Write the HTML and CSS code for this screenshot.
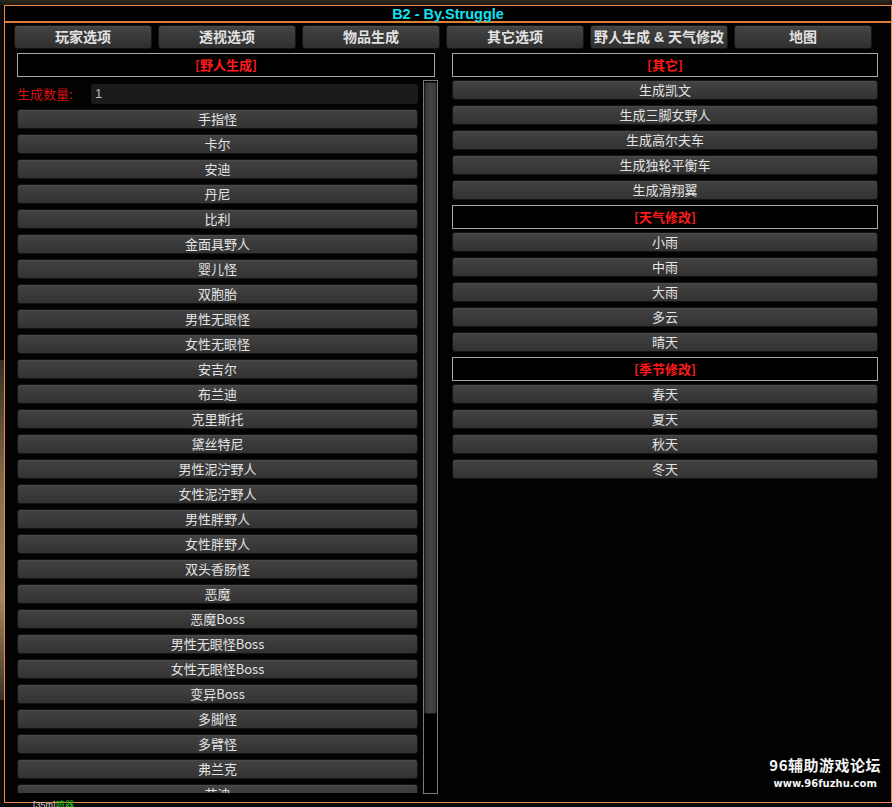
FILE: index.html
```html
<!DOCTYPE html>
<html lang="zh-CN">
<head>
<meta charset="utf-8">
<title>B2 - By.Struggle</title>
<link rel="stylesheet" href="styles.css">
</head>
<body>
<div class="window">
  <div class="titlebar">B2 - By.Struggle</div>
  <nav class="tabs">
    <button class="tab">玩家选项</button>
    <button class="tab">透视选项</button>
    <button class="tab">物品生成</button>
    <button class="tab">其它选项</button>
    <button class="tab">野人生成 &amp; 天气修改</button>
    <button class="tab">地图</button>
  </nav>
  <div class="columns">
    <section class="col col-left">
      <div class="section-head">[野人生成]</div>
      <div class="scroll-wrap">
        <div class="scroll-list">
          <div class="field-row">
            <label class="field-label">生成数量:</label>
            <div class="field-input">1</div>
          </div>
          <button class="btn">手指怪</button>
          <button class="btn">卡尔</button>
          <button class="btn">安迪</button>
          <button class="btn">丹尼</button>
          <button class="btn">比利</button>
          <button class="btn">金面具野人</button>
          <button class="btn">婴儿怪</button>
          <button class="btn">双胞胎</button>
          <button class="btn">男性无眼怪</button>
          <button class="btn">女性无眼怪</button>
          <button class="btn">安吉尔</button>
          <button class="btn">布兰迪</button>
          <button class="btn">克里斯托</button>
          <button class="btn">黛丝特尼</button>
          <button class="btn">男性泥泞野人</button>
          <button class="btn">女性泥泞野人</button>
          <button class="btn">男性胖野人</button>
          <button class="btn">女性胖野人</button>
          <button class="btn">双头香肠怪</button>
          <button class="btn">恶魔</button>
          <button class="btn">恶魔Boss</button>
          <button class="btn">男性无眼怪Boss</button>
          <button class="btn">女性无眼怪Boss</button>
          <button class="btn">变异Boss</button>
          <button class="btn">多脚怪</button>
          <button class="btn">多臂怪</button>
          <button class="btn">弗兰克</button>
          <button class="btn">艾迪</button>
        </div>
        <div class="scrollbar"><div class="thumb"></div></div>
      </div>
    </section>
    <section class="col col-right">
      <div class="section-head">[其它]</div>
      <button class="btn">生成凯文</button>
      <button class="btn">生成三脚女野人</button>
      <button class="btn">生成高尔夫车</button>
      <button class="btn">生成独轮平衡车</button>
      <button class="btn">生成滑翔翼</button>
      <div class="section-head">[天气修改]</div>
      <button class="btn">小雨</button>
      <button class="btn">中雨</button>
      <button class="btn">大雨</button>
      <button class="btn">多云</button>
      <button class="btn">晴天</button>
      <div class="section-head">[季节修改]</div>
      <button class="btn">春天</button>
      <button class="btn">夏天</button>
      <button class="btn">秋天</button>
      <button class="btn">冬天</button>
    </section>
  </div>
  <div class="watermark">
    <div class="wm-name">96辅助游戏论坛</div>
    <div class="wm-url">www.96fuzhu.com</div>
  </div>
</div>
<div class="hud-line">[35m]<span class="hud-green">喷器</span></div>
</body>
</html>
```
FILE: styles.css
```css
html, body {
  margin: 0;
  padding: 0;
}

body {
  width: 892px;
  height: 807px;
  overflow: hidden;
  background:
    linear-gradient(180deg, #2c271c 0px, #1d1a14 5px, #0c0b09 5px),
    #0c0b09;
  font-family: "Noto Sans CJK SC", "Liberation Sans", sans-serif;
  position: relative;
}

/* game scene peeking out on the left edge */
body::before {
  content: "";
  position: absolute;
  left: 0;
  top: 360px;
  width: 4px;
  height: 340px;
  background: linear-gradient(180deg, #3a2f22, #8c7150 40%, #a58860 70%, #3d3125);
}

.window {
  position: relative;
  margin: 5px 0 0 4px;
  width: 886px;
  height: 796px;
  border: 1px solid #e98a48;
  background: #020202;
  display: flex;
  flex-direction: column;
  overflow: hidden;
}

.titlebar {
  height: 15px;
  border-bottom: 2px solid #e07c3c;
  background: #000;
  color: #10e2f2;
  font-family: "Liberation Sans", "Noto Sans CJK SC", sans-serif;
  font-weight: bold;
  font-size: 14.5px;
  line-height: 16px;
  text-align: center;
}

.tabs {
  display: flex;
  gap: 6px;
  padding: 2px 0 0 9px;
}

.tab {
  width: 138px;
  height: 24px;
  margin: 0;
  padding: 0;
  border: 1px solid #151515;
  border-radius: 3px;
  background: linear-gradient(180deg, #444 0%, #3a3a3a 45%, #2f2f2f 100%);
  box-shadow: inset 0 1px 0 #4c4c4c;
  color: #e2e2e2;
  font-family: "Liberation Sans", "Noto Sans CJK SC", sans-serif;
  font-weight: bold;
  font-size: 14px;
  line-height: 22px;
  text-align: center;
}

.columns {
  display: flex;
  gap: 14px;
  padding: 4px 0 0 12px;
  flex: 1;
  min-height: 0;
}

.col {
  display: flex;
  flex-direction: column;
  align-items: stretch;
}

.col-left {
  width: 421px;
}

.col-right {
  width: 426px;
  gap: 5px;
}

.section-head {
  flex: none;
  height: 22px;
  border: 1px solid #a8a8a8;
  background: #000;
  color: #ff1a1a;
  font-weight: bold;
  font-size: 13px;
  line-height: 21px;
  text-align: center;
}

.col-left .section-head {
  width: 416px;
}

.col-right .section-head + .btn {
  margin-top: -2px;
}

.scroll-wrap {
  display: flex;
  gap: 5px;
  margin-top: 3px;
  height: 714px;
}

.scroll-list {
  width: 401px;
  height: 713px;
  overflow: hidden;
  padding-top: 4px;
  box-sizing: border-box;
  display: flex;
  flex-direction: column;
  gap: 5px;
}

.field-row {
  display: flex;
  align-items: center;
  height: 20px;
  flex: none;
}

.field-label {
  width: 74px;
  color: #d40f0f;
  font-size: 13px;
  line-height: 20px;
}

.field-input {
  flex: 1;
  height: 20px;
  border-radius: 3px;
  background: #1b1b1b;
  color: #bdbdbd;
  font-family: "Liberation Sans", sans-serif;
  font-size: 13px;
  line-height: 20px;
  padding-left: 4px;
}

.btn {
  flex: none;
  height: 20px;
  margin: 0;
  padding: 0;
  border: 1px solid #141414;
  border-radius: 3px;
  background: linear-gradient(180deg, #434343 0%, #3a3a3a 50%, #323232 100%);
  box-shadow: inset 0 1px 0 #4a4a4a;
  color: #e4e4e4;
  font-family: "Noto Sans CJK SC", "Liberation Sans", sans-serif;
  font-size: 13px;
  line-height: 16px;
  text-align: center;
}

.scrollbar {
  width: 13px;
  height: 711px;
  border: 1px solid #7a7a7a;
  background: #000;
  padding: 1px 0 0;
  flex: none;
}

.thumb {
  height: 632px;
  border: 1px solid #1a1a1a;
  border-radius: 2px;
  background: linear-gradient(90deg, #353535, #444 50%, #383838);
  box-sizing: border-box;
}

.watermark {
  position: absolute;
  right: 10px;
  bottom: 9px;
  text-align: center;
  color: #f4f4f4;
  font-weight: bold;
}

.wm-name {
  font-size: 15px;
  line-height: 20px;
  letter-spacing: 0.5px;
}

.wm-url {
  font-family: "DejaVu Sans", sans-serif;
  font-size: 10px;
  line-height: 18px;
}

.hud-line {
  position: absolute;
  left: 33px;
  top: 800px;
  color: #d8d8d8;
  font-family: "Liberation Sans", sans-serif;
  font-size: 9px;
  line-height: 10px;
}

.hud-green {
  color: #2fd12f;
}
```
